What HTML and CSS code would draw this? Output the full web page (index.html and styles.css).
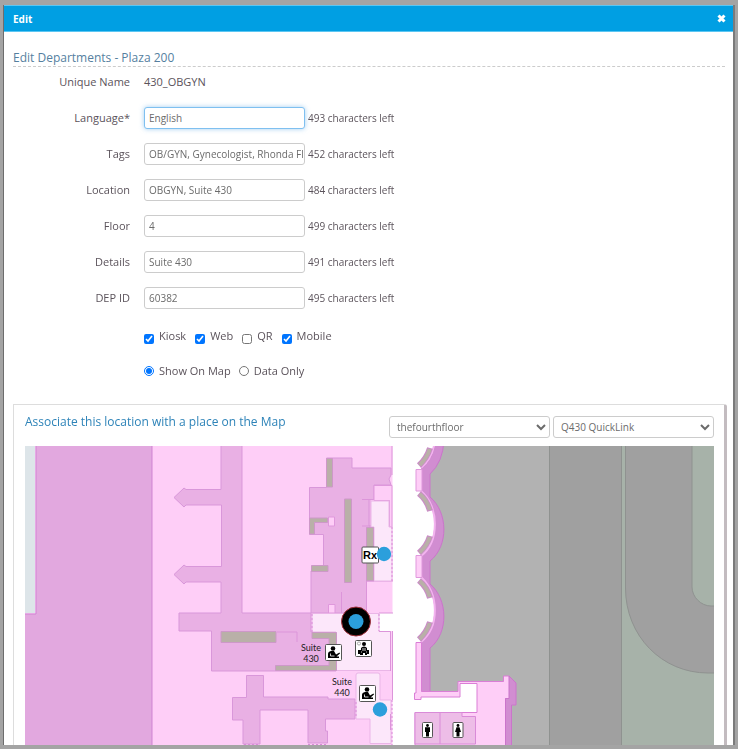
FILE: index.html
```html
<!DOCTYPE html>
<html lang="en">
<head>
	<meta charset="UTF-8">
	<title>Edit</title>
	<link rel="stylesheet" href="styles.css">
</head>
<body>
	<div class="modal">
		<div class="modal-header">
			<h1>Edit</h1>
			<button type="button" class="close" aria-label="Close">
				<svg viewBox="0 0 9 9"><path d="M1.5 1.5L7.5 7.5M7.5 1.5L1.5 7.5"/></svg>
			</button>
		</div>
		<form class="modal-body">
			<h2>Edit Departments - Plaza 200</h2>
			<div class="row name-row">
				<span class="label">Unique Name</span>
				<span>430_OBGYN</span>
			</div>
			<div class="row">
				<label class="label" for="language">Language*</label>
				<input type="text" class="text active" id="language" value="English" autofocus>
				<span class="left">493 characters left</span>
			</div>
			<div class="row">
				<label class="label" for="tags">Tags</label>
				<input type="text" class="text" id="tags" value="OB/GYN, Gynecologist, Rhonda Fleming">
				<span class="left">452 characters left</span>
			</div>
			<div class="row">
				<label class="label" for="location">Location</label>
				<input type="text" class="text" id="location" value="OBGYN, Suite 430">
				<span class="left">484 characters left</span>
			</div>
			<div class="row">
				<label class="label" for="floor">Floor</label>
				<input type="text" class="text" id="floor" value="4">
				<span class="left">499 characters left</span>
			</div>
			<div class="row">
				<label class="label" for="details">Details</label>
				<input type="text" class="text" id="details" value="Suite 430">
				<span class="left">491 characters left</span>
			</div>
			<div class="row">
				<label class="label" for="depid">DEP ID</label>
				<input type="text" class="text" id="depid" value="60382">
				<span class="left">495 characters left</span>
			</div>
			<div class="options checks">
				<label><input type="checkbox" checked>Kiosk</label>
				<label><input type="checkbox" checked>Web</label>
				<label><input type="checkbox">QR</label>
				<label><input type="checkbox" checked>Mobile</label>
			</div>
			<div class="options radios">
				<label><input type="radio" name="show" checked>Show On Map</label>
				<label><input type="radio" name="show">Data Only</label>
			</div>

			<div class="panel">
				<div class="panel-head">
					<h3>Associate this location with a place on the Map</h3>
					<select aria-label="Floor map">
						<option>thefourthfloor</option>
					</select>
					<select aria-label="Place">
						<option>Q430 QuickLink</option>
					</select>
				</div>
				<svg class="map" viewBox="25 446 689 320" role="img" aria-label="Fourth floor map">
					<defs>
						<g id="desk">
							<rect class="sign" x="0.5" y="0.5" width="16" height="16" rx="1"/>
							<circle cx="8" cy="4.5" r="2.3"/>
							<path d="M3 13V10Q3 7.500 6 7H9L11 10.500L14.500 8.500L15 9.500L11.500 12.500H14V14H3Z"/>
							<path class="cut" d="M5.500 9.500V12H9.500"/>
						</g>
						<g id="waiting">
							<rect class="sign" x="0.5" y="0.5" width="16" height="16" rx="1"/>
							<circle class="clock" cx="4" cy="3.5" r="1.6"/>
							<circle cx="9" cy="4" r="2"/>
							<path d="M6 10V8Q7 6.500 9 6.500Q11 6.500 12 8V10L14 10V14H12V15H10V13H8V15H5V14H3V10Z"/>
							<path class="cut" d="M8 8V11M10 8V11M6 12H7M11 12H12"/>
						</g>
					</defs>

					<!-- hallway and outside -->
					<rect class="white" x="25" y="446" width="689" height="320"/>
					<path class="ground" d="M430 446H549V766H430Z"/>
					<path class="road" d="M549.5 440H621.5V770H549.5Z"/>
					<path class="grass" d="M622 446H714V766H622Z"/>
					<path class="road" d="M625.5 440V588C625.5 636 662 673 708 673H720V606H711C701 606 692 597 692 587V440Z"/>

					<!-- left wing -->
					<path class="floor" d="M25 446H392.500V613H379V631H392.500V766H25Z"/>
					<path class="wing" d="M36 440H152V770H20V614H36Z"/>
					<path class="pale-blue" d="M25 446H35V613H25Z"/>
					<path class="hall" d="M221 440V489.500H186L184 488L174 497.500L184 507L186 505H221.500V566.500H186L184 565L174 574.500L184 584L186 582H221V613H179V631H211.500V671H336V632H311V613H242V440Z"/>
					<path class="hall" d="M246.500 675.500H263.500V697H328V699H355V719H325.500V731H327.500V743H308V710H260V744H243V720H232.500V697.500H246.500Z"/>
					<path class="hall" d="M326.500 458H352V468H391V475L389 479L391 485H374V499.500H369V526H374V581H366.500V613H311V571H323.500V534.500H309.500V487.500H326.500Z"/>
					<path class="floor line" d="M374 485.500H392V527H389.500V500.500H374ZM328.500 517H334.500V526H328.500ZM328.500 613V604.500H335V613Z"/>
					<path class="edge" d="M341.500 613V592M362 499.500H370V526M362 526H375M277 632H297V642M392 446V475M366.500 581V613M393 581H366"/>
					<path class="room" d="M371 501H389V527H392V581H374V527H371Z"/>
					<path class="room" d="M312 613.500H379V631.500H390.500V670.500H336V632H312Z"/>
					<path class="room" d="M356 675Q356 673 358 673H378Q380 673 380 675V700H391V743.500H370V719H356Z"/>
					<path class="dots" d="M312 614V632M379 614V631M392 527V581M356 702V718M392 700V745M244 744.500H260M308 744.500H326"/>
					<path class="edge" d="M379 613H393M379 631.500H390.500V671M392.500 631V700M390.500 714V730"/>
					<path class="shelf" d="M326.500 458.500H332.500V487H326.500ZM344.500 499H351.500V582.500H344.500ZM366.500 527.500H373.500V580.500H366.500ZM309.500 518H327.500V522.500H314.500V534H309.500ZM311.500 565.500H328V571.500H311.500ZM221 631.500H276V642.500H221ZM312 632.500H336.500V670.500H275.500V665.500H329V638.500H312Z"/>

					<!-- bay windows -->
					<path class="white" d="M421 446H435Q434 459 421 469ZM421 491C439 506 440 541 421 556ZM421 577C439 594 440 626 421 642Z"/>
					<path class="bay" d="M435 440Q434 459 421 469V491C439 506 440 541 421 556V577C439 594 440 626 421 642V692H430V648C449 633 448 599 430 584V561C449 546 448 512 430 497V474Q443 462 444 440Z"/>
					<path class="ledge" d="M435 440Q433 458 421 468M421 491C439 506 440 541 421 556M421 577C439 594 440 626 421 642"/>
					<path class="floor line" d="M416 469.500H422V491H416ZM416 555.500H422V577.500H416Z"/>
					<path class="seat-edge" d="M430 448Q427 458 419 465.500M419 493.500Q427 500 430 511M430 536Q427 546 419 553M419 580.500Q427 587 430 598M430 622Q427 632 419 639.500"/>
					<path class="seat" d="M429.700 449Q427 458 419.700 465M419.700 494Q427 500 429.700 510M429.700 537Q427 546 419.700 552.500M419.700 581Q427 587 429.700 597M429.700 623Q427 632 419.700 639"/>

					<!-- restrooms block -->
					<path class="white" d="M460 683H478V713H415V697H460Z"/>
					<path class="floor line strong" d="M416 642.500H421.500V691.500H458V681.500H503.500V676H509.500V698.500H505.500V770H415V712.500H477V683.500H460V697H421V699.500H414.500V693H416Z"/>
					<path class="bay" d="M509 676L516 683V705H511.500V770H505.500V698.500H509Z"/>
					<path class="restroom" d="M415 712.500H462V716.500H475.500V744H415ZM440 712V744"/>
					<rect class="sign" x="422.500" y="722.500" width="10" height="15" rx="1"/>
					<circle cx="427.500" cy="725.500" r="1.400"/>
					<path d="M425 727.200H430V732H429V736.500H426V732H425Z"/>
					<rect class="sign" x="453" y="722.500" width="10" height="15" rx="1"/>
					<circle cx="458" cy="725.500" r="1.400"/>
					<path d="M456.500 727.200H459.500L461 732H459.500V736.500H456.500V732H455Z"/>

					<!-- markers -->
					<rect class="sign" x="362" y="547" width="16.500" height="16" rx="1"/>
					<text class="rx" x="370" y="559">Rx</text>
					<circle class="dot" cx="384" cy="554" r="7.200"/>
					<circle class="ring" cx="356" cy="621.500" r="14.500"/>
					<circle class="dot" cx="356" cy="621.500" r="7.500"/>
					<circle class="dot" cx="380" cy="709.500" r="7.200"/>
					<use href="#desk" x="325" y="644"/>
					<use href="#waiting" x="355" y="640"/>
					<use href="#desk" x="359" y="685"/>
					<text class="suite" x="311" y="651">Suite</text>
					<text class="suite" x="311" y="662">430</text>
					<text class="suite" x="342" y="685">Suite</text>
					<text class="suite" x="342" y="696">440</text>
				</svg>
			</div>
		</form>
	</div>
</body>
</html>
```
FILE: styles.css
```css
*{
	box-sizing: border-box;
}
body{
	margin: 0;
	height: 100vh;
	padding: 5px 3px 4px 3px;
	background-color: #a4a4a4;
	font-family: "Open Sans", "Noto Sans", sans-serif;
	font-size: 11px;
	line-height: 16px;
	color: #5b535b;
	overflow: hidden;
}
h1,h2,h3{
	margin: 0;
}
.modal{
	height: 100%;
	background-color: #fff;
	border-left: 1px solid #6d6d6d;
	border-right: 2px solid #7b7b7b;
	overflow: hidden;
}
.modal-header{
	display: flex;
	justify-content: space-between;
	align-items: center;
	height: 27px;
	padding: 0 7px 0 9px;
	background-color: #009fe3;
	border: 1px solid #5cc6f2;
	border-left: 0;
	border-right: 0;
}
.modal-header h1{
	font-size: 10px;
	color: #fff;
}
.close{
	display: flex;
	padding: 0;
	border: 0;
	background: none;
}
.close svg{
	width: 9px;
	height: 9px;
	stroke: #fff;
	stroke-width: 3;
}
.modal-body{
	padding: 17px 6px 0 9px;
}
h2{
	margin-right: 2px;
	border-bottom: 1px dashed #ccc;
	font-size: 12px;
	font-weight: normal;
	line-height: 17px;
	color: #557f9f;
}
.row{
	display: flex;
	align-items: center;
	height: 22px;
	margin-bottom: 14px;
}
.name-row{
	margin-top: 4px;
}
.label{
	width: 117px;
	margin-right: 14px;
	text-align: right;
}
.text{
	width: 161px;
	height: 22px;
	padding: 0 0 1px 4px;
	border: 1px solid #ccc;
	border-radius: 3px;
	font-family: inherit;
	font-size: 10px;
	color: #6b6b6b;
}
.text.active{
	border-color: #7fc0f0;
	outline: none;
	box-shadow: 0 0 5px rgba(102, 175, 233, 0.6);
}
.left{
	margin-left: 3px;
	font-size: 10px;
}
.options{
	display: flex;
	margin-left: 131px;
}
.options label{
	display: flex;
}
.options input{
	width: 10px;
	height: 10px;
	margin: 3px 5px 0 0;
}
.checks{
	gap: 9px;
	padding-top: 5px;
}
.checks input{
	margin-top: 6px;
}
.radios{
	gap: 8px;
	margin-top: 19px;
}
.panel{
	margin-top: 25px;
	padding: 11px 10px 0 11px;
	border: 1px solid #ddd;
	border-right: 3px solid #c3bcc0;
	border-radius: 0 3px 0 0;
}
.panel-head{
	display: flex;
	gap: 3px;
	margin-bottom: 8px;
}
.panel-head h3{
	flex: 1;
	font-size: 12px;
	font-weight: normal;
	line-height: 12px;
	color: #2d83b8;
	white-space: nowrap;
}
.panel-head select{
	width: 161px;
	height: 22px;
	padding: 0 3px;
	border: 1px solid #ccc;
	border-radius: 3px;
	background-color: #fff;
	font-family: inherit;
	font-size: 10px;
	color: #6b6b6b;
}
.map{
	display: block;
	width: 100%;
}
.white{
	fill: #fff;
}
.ground{
	fill: #b2b2b2;
}
.road{
	fill: #a0a0a0;
	stroke: #8f9290;
}
.grass{
	fill: #a7b2a9;
}
.floor{
	fill: #fecef7;
}
.wing{
	fill: #e2a8df;
	stroke: #cf83d2;
}
.pale-blue{
	fill: #dde5e9;
}
.hall{
	fill: #e9b0e4;
	stroke: #d997da;
}
.line{
	stroke: #df98dc;
}
.strong{
	stroke: #da7ed6;
}
.edge{
	fill: none;
	stroke: #dc95da;
}
.room{
	fill: #fce7fa;
	stroke: #eab5e7;
}
.dots{
	fill: none;
	stroke: #d98bd8;
	stroke-dasharray: 2 2;
}
.shelf{
	fill: #b9b0a8;
	stroke: #cd98c8;
}
.bay{
	fill: #d18dd1;
	stroke: #cb74cb;
}
.ledge{
	fill: none;
	stroke: #f3b4ef;
	stroke-width: 2;
}
.seat-edge{
	fill: none;
	stroke: #cb8bc8;
	stroke-width: 6;
}
.seat{
	fill: none;
	stroke: #b9b0a8;
	stroke-width: 4;
}
.restroom{
	fill: #edbde7;
	stroke: #d98bd8;
}
.sign{
	fill: #fff;
	stroke: #555;
}
.cut{
	fill: none;
	stroke: #fff;
	stroke-width: 0.8;
}
.clock{
	fill: #fff;
	stroke: #777;
	stroke-width: 0.6;
}
.dot{
	fill: #2b9fdc;
}
.ring{
	fill: #000;
	stroke: #a3303a;
}
.rx{
	font: bold 11px "Liberation Sans", sans-serif;
	text-anchor: middle;
}
.suite{
	font-family: Lato, sans-serif;
	font-size: 9px;
	fill: #222;
	text-anchor: middle;
}
```
